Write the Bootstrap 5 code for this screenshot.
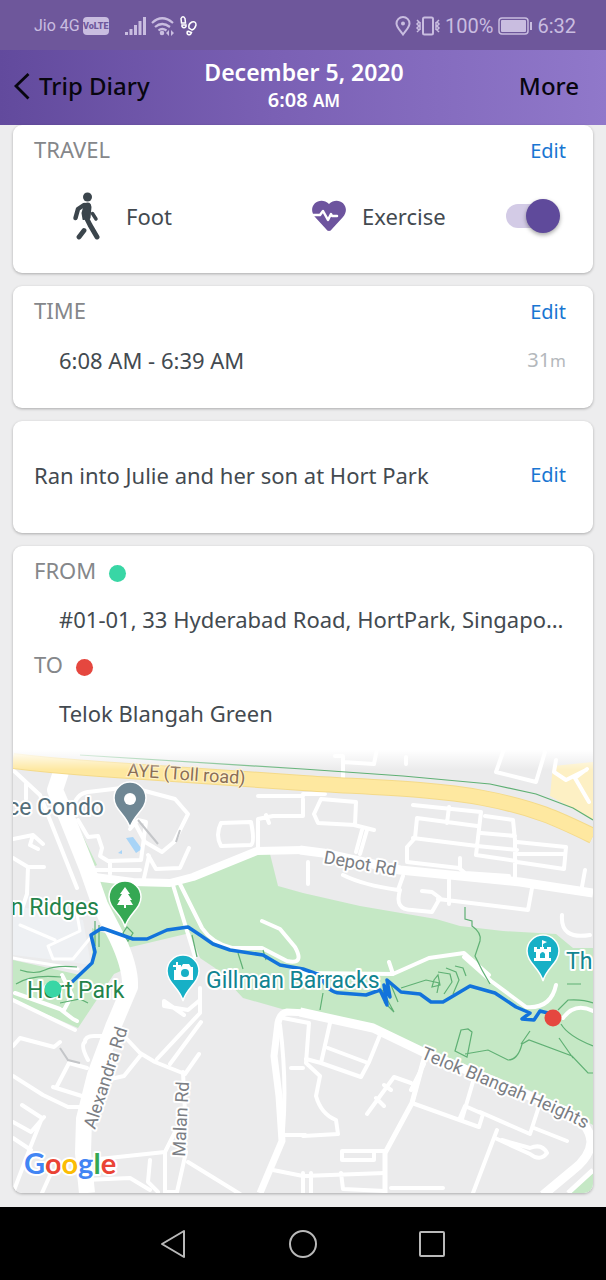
<!DOCTYPE html>
<html lang="en">
<head>
<meta charset="utf-8">
<meta name="viewport" content="width=device-width, initial-scale=1">
<title>Trip Diary</title>
<link href="https://cdn.jsdelivr.net/npm/bootstrap@5.3.0/dist/css/bootstrap.min.css" rel="stylesheet">
<style>
  body { background: #ededee; color: #434a50; font: 22px/32px "Noto Sans", sans-serif; }
  .status-bar { height: 50px; background: #6e579b; color: #c9bde0; font: 20px/24px Roboto, sans-serif; padding: 2px 30px 0 34px; }
  .carrier { font-size: 16px; }
  .volte { background: #c9bde0; color: #6e579b; font: 900 9px/18px Roboto, sans-serif; border-radius: 4px; width: 26px; margin-left: 3px; }
  .app-header { display: grid; grid-template-columns: 1fr auto 1fr; height: 75px; padding: 0 27px 3px 13px; background: linear-gradient(90deg, #624a9d, #7a60b4 45%, #9078ca); color: #fff; }
  .head-btn { border: 0; background: none; padding: 0; color: #08060f; font-size: 24px; font-weight: 500; }
  .head-title { font-size: 23px; line-height: 28px; font-weight: 600; }
  .head-time { font-size: 20px; line-height: 28px; font-weight: 600; }
  .head-time small { font-size: 17px; line-height: 1; }
  .feed { padding: 0 13px 14px; gap: 13px; }
  .tile { background: #fff; border-radius: 9px; box-shadow: 0 1px 3px rgba(0,0,0,.28); overflow: hidden; padding: 10px 27px 0 21px; }
  .tile-row { height: 32px; }
  .tile-head { color: #85878a; font-size: 22px; font-weight: 400; line-height: 28px; margin: 0; }
  .edit-link { color: #1976d2; font-size: 20px; text-decoration: none; }
  .mode-row { padding: 29px 6px 37px 30px; }
  .mode-row > div { flex: 1 1 0; height: 40px; }
  .indent { padding-left: 25px; }
  .duration { color: #b4b8bc; font-size: 20px; }
  .duration small { font-size: 17px; line-height: 1; }
  .dot { width: 17px; height: 17px; border-radius: 50%; margin: 9px 0 0 13px; }
  .switch { appearance: none; position: relative; width: 54px; height: 34px; margin: 0; flex: none; }
  .switch::before { content: ""; position: absolute; inset: 5px 6px 5px 0; border-radius: 12px; background: #d3cbe6; }
  .switch::after { content: ""; position: absolute; right: 0; top: 0; width: 34px; height: 34px; border-radius: 50%; background: #5f4a9b; box-shadow: 0 2px 4px rgba(0,0,0,.35); }
  .switch:not(:checked)::after { right: 20px; background: #fafafa; }
  .note-tile { padding-top: 38px; padding-bottom: 42px; }
  .place-tile { padding-right: 0; }
  .place-name { padding-top: 15px; margin-bottom: 15px; }
  .map { display: block; width: calc(100% + 21px); height: auto; margin: 16px 0 0 -21px; font-family: Roboto, sans-serif; }
  .halo { paint-order: stroke; stroke: #fff; stroke-width: 4px; stroke-linejoin: round; }
  .sys-nav { height: 73px; background: #000; padding: 0 160px; }
  .sys-nav button { border: 0; background: none; padding: 0; line-height: 0; }
</style>
</head>
<body>
<div class="min-vh-100 d-flex flex-column">
  <div class="status-bar d-flex align-items-center">
    <span class="carrier">Jio 4G</span>
    <span class="volte text-center">VoLTE</span>
    <svg class="ms-3" width="22" height="20" viewBox="0 0 22 20" fill="#c9bde0"><path d="M0 16h3v3H0zM4.500 13h3v6h-3zM9 9h3v10H9zM13.500 5h3v14h-3zM18 1h3v18h-3z"/></svg>
    <svg class="ms-1" width="24" height="20" viewBox="0 0 24 20" fill="none" stroke="#c9bde0" stroke-width="2.200"><path d="M1 7Q11-2.500 22 7M4 11q7-6 15 0M7.500 14.500q3.500-3 8 0"/><circle cx="11" cy="17" r="1.200"/><path d="M15 17l3-3v6zM23 17l-3-3v6z" fill="#c9bde0" stroke="none"/></svg>
    <svg class="ms-1" width="19" height="20" viewBox="0 0 19 20" fill="none" stroke="#fff" stroke-width="1.500"><path d="M2 2.500Q4-1 6 2.500L6.500 7h-4zM3 9h4v1.500q-2 2.500-4 0zM10 12q-1-4 3-6 4-1 4 3-1 4-4 5zM8.500 15l4 1.500q-1 3-3.500 2-1.500-1-.5-3.500"/></svg>
    <svg class="ms-auto" width="16" height="20" viewBox="0 0 16 20" fill="none" stroke="#c9bde0" stroke-width="2"><path d="M8 18.500C4 13 1.500 11 1.500 7.500a6.500 6.500 0 0 1 13 0C14.500 11 12 13 8 18.500z"/><circle cx="8" cy="7.500" r="1" fill="#c9bde0"/></svg>
    <svg class="ms-1 me-1" width="26" height="20" viewBox="0 0 26 20" fill="none" stroke="#c9bde0" stroke-width="2"><rect x="8" y="1.500" width="10" height="17" rx="1.500"/><path d="M2 4l2 2-2 2 2 2-2 2 2 2-2 2M5 6v8M24 4l-2 2 2 2-2 2 2 2-2 2 2 2M21 6v8" stroke-width="1.500"/></svg>
    <span>100%</span>
    <svg class="mx-1" width="36" height="18" viewBox="0 0 36 18"><rect x="2" y="1" width="29" height="16" rx="3" fill="none" stroke="#c9bde0" stroke-width="1.500"/><rect x="4" y="3" width="25" height="12" rx="1" fill="#c9bde0"/><path d="M34 5v8" stroke="#c9bde0" stroke-width="2"/></svg>
    <span>6:32</span>
  </div>

  <header class="app-header align-items-center">
    <button class="head-btn d-flex align-items-center justify-content-start" type="button">
      <svg class="me-2" width="18" height="28" viewBox="0 0 18 28" fill="none" stroke="#08060f" stroke-width="2.800"><path d="M15.500 2L3 14l12.500 12.500"/></svg>Trip Diary
    </button>
    <div class="text-center ps-3">
      <h1 class="head-title m-0">December 5, 2020</h1>
      <div class="head-time">6:08 <small>AM</small></div>
    </div>
    <button class="head-btn text-end" type="button">More</button>
  </header>

  <main class="feed d-flex flex-column">
    <section class="tile">
      <div class="tile-row d-flex justify-content-between"><h2 class="tile-head">TRAVEL</h2><a class="edit-link" href="#travel">Edit</a></div>
      <div class="mode-row d-flex">
        <div class="d-flex align-items-center">
          <svg class="me-4 ms-2" width="30" height="48" viewBox="0 0 30 48" fill="none" stroke="#3b454c" stroke-linecap="round" stroke-linejoin="round"><circle cx="15.500" cy="5" r="4.500" fill="#3b454c" stroke="none"/><path d="M13 12q5-2 5.500 3l-1 11-6 1-1-6z" fill="#3b454c" stroke-width="2"/><path d="M12 13l-6 4-2.500 9" stroke-width="4.500"/><path d="M14 25l4 8 7 12" stroke-width="5"/><path d="M12 38.500l-5 6.500" stroke-width="4.800"/><path d="M20.500 21.500l3.500 5.500" stroke-width="3.500"/></svg>Foot
        </div>
        <div class="d-flex align-items-center">
          <svg class="me-3" width="34" height="32" viewBox="0 0 34 32"><path d="M17 31q-2 0-3-2L3 17C-6 6 8-5 17 4c9-9 23 2 14 13L20 29q-1 2-3 2z" fill="#6d549e"/><path d="M1 15h7l3-4 5 9 3-6 1 2h5" fill="none" stroke="#fff" stroke-width="2.500" stroke-linejoin="round" stroke-linecap="round"/></svg>
          <label for="exercise">Exercise</label>
          <input class="switch ms-auto" type="checkbox" role="switch" id="exercise" checked>
        </div>
      </div>
    </section>

    <section class="tile">
      <div class="tile-row d-flex justify-content-between"><h2 class="tile-head">TIME</h2><a class="edit-link" href="#time">Edit</a></div>
      <div class="indent d-flex justify-content-between pt-3 pb-3 mb-3"><span>6:08 AM - 6:39 AM</span><span class="duration">31<small>m</small></span></div>
    </section>

    <section class="tile note-tile d-flex justify-content-between">
      <span>Ran into Julie and her son at Hort Park</span><a class="edit-link" href="#note">Edit</a>
    </section>

    <section class="tile place-tile">
      <div class="tile-row d-flex align-items-start"><h2 class="tile-head">FROM</h2><span class="dot" style="background:#39d6a5"></span></div>
      <div class="place-name indent pe-4 text-truncate">#01-01, 33 Hyderabad Road, HortPark, Singapore 119578</div>
      <div class="tile-row d-flex align-items-start"><h2 class="tile-head">TO</h2><span class="dot" style="background:#e5473f"></span></div>
      <div class="place-name indent">Telok Blangah Green</div>

      <svg class="map" viewBox="13 745 580 448" role="img" aria-label="Route map">
        <defs>
          <linearGradient id="fade" x1="0" y1="0" x2="0" y2="1"><stop offset=".2" stop-color="#fff"/><stop offset="1" stop-color="#fff" stop-opacity="0"/></linearGradient>
          <path id="pin" d="M0 30C-3 17-16 12-16 0a16 16 0 0 1 32 0C16 12 3 17 0 30z" stroke="#fff" stroke-width="1.500"/>
          <path id="heights" d="M420 1058Q500 1091 545 1110T590 1135"/>
        </defs>
        <path fill="#ebebec" d="M13 745h580v448H13z"/>
        <path fill="#eef0f3" d="M13 905l70 15 8 45-35-5-43-5z"/>
        <!-- parks -->
        <g fill="#c5e8c5">
          <path d="M97 880l70 5 83-33 20 2 8 32 25 7 57 13 76 13 24 7 43 5 53 3 17 14h20v177l-57-32-90-36-60-22-83-20-60-17-28-30-15-10-10-25-63 15z"/>
          <path d="M92 928l20 8 20 30-18 8-36 54-65-28v-40l67 15 12-12z"/>
          <path d="M68 819l7 1 22 45-6 3zM570 1193l23-20v20z"/>
        </g>
        <path fill="#fdf0c4" d="M553 766l40-4v58l-43-24z"/>
        <path fill="#a8d4f7" d="M126 838l7-1 9 12-6 4zM118 853l4-3v4z"/>
        <!-- minor roads -->
        <g fill="none" stroke="#fff" stroke-width="4" stroke-linejoin="round" stroke-linecap="round">
          <path d="M13 770l27 25 37 93M26 784v15M13 839l20-4 10 9M33 835l-3 10 8 4M13 858l15 9 16 0M28 867l-1 27-5 15"/>
          <path d="M73 810q2-16 15-18l42-5 45 12 13 15-14 28-12 10-17-10-15-28M78 820l10 17 10-1 4 12-2 8 8 5 33-1 5-38-8-2-8 9M90 870l50 0M110 862v12M148 855l8 14 24-1 9-20M149 856l-5 22"/>
          <path d="M173 885l22 72M180 884l22 44q10 15 30 20l30 0 25 13q18 4 8-14l-15-18-18-8"/>
          <path stroke-width="3" d="M75 903l5 28-32 15 5 13h20l18-22M55 940l-35-15M13 958l10 2 55 9"/>
          <path d="M258 796h45M303 799v17h-30l-15 3v30M266 815l3 8M221 823l30-1q4 20 0 23l-30 1q-6-11 0-23zM303 794h22M321 799l35 3-1 23-37-2-4-9zM354 825l20 5M362 830l-6 22M367 830l-7 24"/>
          <path d="M413 805l68 7-5 43 40 6M449 807l-2 16M417 818l60 8M417 818l-2 20-8 9v15l52 6 6 5 44 3M413 838l64 8 40 4M485 816l28 4 2 20 0 40M481 833l34 3M517 842l49 5-2 22-47-7M518 854h46M460 868v-10M585 870l-4 22"/>
          <path d="M308 862v22M343 875q20 10 55 15l5-14M400 890q-6 20 12 20l20 2 8-14-8-6-10-1M438 899l90 11 4-22M449 880v24M562 915q-2 25 28 20"/>
          <path d="M335 756h8v22M343 762l31 2 3-15M406 757v7M504 749l-8 23 40 10 9-30M556 760l-2 12 12 8 20-10M575 778l14 24M575 778l12-9"/>
          <path d="M303 973l90 1 36-16 35-5 25 22M393 974l-4-12M464 957l27 24 35 26q25 2 30-22M563 1018q12-16 30-7"/>
          <path d="M13 1000l62 30M15 993l45 16 13 10 4 2M62 975l10 20-8 15M13 1046l7-8 34 9 6-5M88 1060q-8-15-3-18 0-6 9-6h30l16 17 15 9 30 12 14-20M140 1056l-16 20-18 4M56 1088l13-25 18 5M53 1087l32 10M13 1076l30 19 25 12h18"/>
          <path d="M13 1122l18 10 13-15M22 1105l20 13-12 30-17 45M13 1138l18 12M42 1193l10-22M90 1160l75-8q10-20 20-40l-2-40M165 1152v40l12 0 9-40M85 1180l45-2 20 12M150 1160l-2 22 10 10M188 1162l52 32"/>
          <path d="M157 1059l43-46v-25M170 1064l31-42M200 1000l-12 10-24-4 0-5 20 14"/>
          <path d="M280 1025q7 55 3 105M283 1135h22M291 1068h12M283 1018l26 5-3 40 14 13-4 20q5 18 20 24l2 14-35 2M273 1170l30 6 82-3M303 1173v20M311 1173v20M341 1173l2 16 42 2"/>
          <path d="M330 1023l-9 40-15-4M328 1048l40 15M321 1063l40 14 8-15 11-27M425 1055l-13 48M412 1103l67 24 4-13-18-8-6 14M424 1064l-13 26M411 1083l-17-6-27 37M376 1098l8 8M384 1085l7 5M475 1075l-13 44M480 1112l50 22 11-34M534 1128l33 13M497 1130l-24 63M495 1138l35 16q10 8 17-1-5-10-17-5l-28-8M386 1151h-44v9h32l0-8M391 1188h52"/>
        </g>
        <!-- main roads -->
        <g fill="none" stroke="#fff" stroke-linejoin="round">
          <path stroke-width="16" d="M61 772l-6 18 12 28 20 50 13 37 17 33q14 30 13 49l-17 40-18 48-11 44-1 34 4 40"/>
          <path stroke-width="8" d="M87 876l46 6 37 1 23-6 64-26 46-1"/>
          <path stroke-width="9" d="M300 850l23 3 77 17 70 7 50 5 73 11"/>
          <path stroke-width="7" d="M260 1193l22-52-3-45-5-40 4-33q2-10 9-11l20 1"/>
          <path stroke-width="9" d="M300 1012l73 16 50 24 80 33 65 27q22 12 23 30-1 15-18 28l-30 25"/>
          <path stroke-width="5" d="M568 1193l25-23M385 1193v-40l27-50 13-48"/>
        </g>
        <path fill="none" stroke="#f4da8a" stroke-width="16" d="M13 761q40 5 87 8l203 14c57 4 127 5 180 15s77 22 110 38"/>
        <path fill="none" stroke="#fee8a0" stroke-width="14" d="M13 761q40 5 87 8l203 14c57 4 127 5 180 15s77 22 110 38"/>
        <!-- footpaths -->
        <g fill="none" stroke="#5fb074" stroke-width="1.200">
          <path d="M80 755l223 14 100 7 87 8 46 10 37 14 20 12"/>
          <path d="M465 907v12l7 2v5q10 7 8 15l-5 15q7 15 15 28M438 972l12 2 2 8-8 12M446 968l10 4 3 8-6 14M455 966l8 2 3 8M401 988l25-8 13 3-2 10M434 980l4-5 2 10-8 2z"/>
          <path d="M461 1030l7-1 4 3-5 25-12-6zM465 1054l23-4 20 10q10 0 14-16l7-4 43 16 16 17h6M530 1031l-9 13M559 1038l14 20M561 1024q7 12 32 22M558 1010l10-10q15-1 25 3M567 984h14M320 1010l3-17M382 990l12 22-10-10M391 985l7 17"/>
          <path d="M95 921v25M99 925v22M127 927l6 6-5 8-5-8zM20 970q15 5 25 0t32-3M16 984q15-10 45-7M60 1003l20-4 8 4M192 935l5 22M238 953l5 16M263 950l3 10"/>
        </g>
        <g fill="none" stroke="#c4c6c9" stroke-width="2"><path d="M138 820l20 24M60 1048l8 12 12 3M180 830l-4 12"/></g>
        <!-- walked route -->
        <path fill="none" stroke="#1273db" stroke-width="3.500" stroke-linejoin="round" d="M72 982l20-19 3-11-4-17 11-7 31 11h14l20-9 21-3 12 8 13 9 17 6 33 5 17 10 23 4 17 6q8 18 20 18l26 2 14-5 7 15-3-20 6 12-3-17 14 12 19 2 11 8h12l27-16 25 7 21 14 14 6-8 6 12 1 6-9 12 3"/>
        <!-- labels -->
        <g class="halo" font-size="23">
          <g fill="#546e7a"><text x="104" y="815" text-anchor="end">ce Condo</text></g>
          <g fill="#23834a"><text x="99" y="915" text-anchor="end">n Ridges</text><text x="27" y="998">Hort Park</text></g>
          <g fill="#118491"><text x="206" y="988">Gillman Barracks</text><text x="566" y="969">Th</text></g>
        </g>
        <g class="halo" font-size="18" fill="#7b7e84">
          <text transform="translate(323 863) rotate(10)">Depot Rd</text>
          <text transform="translate(95 1130) rotate(-72)">Alexandra Rd</text>
          <text transform="translate(185 1157) rotate(-87)">Malan Rd</text>
          <text><textPath href="#heights">Telok Blangah Heights</textPath></text>
        </g>
        <text transform="translate(127 776) rotate(4)" font-size="18" fill="#8a6e55" paint-order="stroke" stroke="#fff3cc" stroke-width="2">AYE (Toll road)</text>
        <!-- place pins -->
        <use href="#pin" x="130" y="798" fill="#6f8794"/><circle cx="130" cy="799" r="6" fill="#fff"/>
        <use href="#pin" x="125" y="897" fill="#35a853"/><path fill="#fff" d="M125 887l5 7h-2l4 6h-2l3 5h-7v3h-2v-3h-7l3-5h-2l4-6h-2z"/>
        <use href="#pin" x="183" y="971" fill="#17b0c6"/><path fill="#fff" d="M177 967h4l2-3h6l2 3h2v13h-19v-10h3zM173 965h3v-3h2v3h3v2h-3v3h-2v-3h-3z"/><circle cx="185" cy="973" r="4" fill="#17b0c6"/>
        <use href="#pin" x="543" y="951" fill="#17b0c6"/><path fill="#fff" d="M534 947h3v2h3v-2h2v-7l5 2-4 2v3h1v2h3v-2h4v5h-2v6h2v3h-17v-3h2v-6h-2z"/><path fill="#17b0c6" d="M540 958v-4q3-4 5 0v4z"/>
        <circle cx="53" cy="989" r="8.500" fill="#39d6a5"/><circle cx="553" cy="1018" r="8.500" fill="#e5473f"/>
        <text class="halo" x="24" y="1174" font-family="Lato" font-size="29" font-weight="700"><tspan fill="#4285f4">G</tspan><tspan fill="#ea4335">o</tspan><tspan fill="#fbbc05">o</tspan><tspan fill="#4285f4">g</tspan><tspan fill="#34a853">l</tspan><tspan fill="#ea4335">e</tspan></text>
        <path fill="url(#fade)" d="M13 745h580v25H13z"/>
      </svg>
    </section>
  </main>

  <nav class="sys-nav d-flex justify-content-between align-items-center mt-auto" aria-label="System">
    <button type="button" aria-label="Back"><svg width="27" height="30" viewBox="0 0 27 30" fill="none" stroke="#b9b9b9" stroke-width="2" stroke-linejoin="round"><path d="M24 2v26L2 15z"/></svg></button>
    <button type="button" aria-label="Home"><svg width="30" height="30" viewBox="0 0 30 30" fill="none" stroke="#b9b9b9" stroke-width="2"><circle cx="15" cy="15" r="13"/></svg></button>
    <button type="button" aria-label="Recents"><svg width="28" height="30" viewBox="0 0 28 30" fill="none" stroke="#b9b9b9" stroke-width="2"><rect x="2" y="3" width="24" height="24" rx="1"/></svg></button>
  </nav>
</div>
<script src="https://cdn.jsdelivr.net/npm/bootstrap@5.3.0/dist/js/bootstrap.bundle.min.js"></script>
</body>
</html>
